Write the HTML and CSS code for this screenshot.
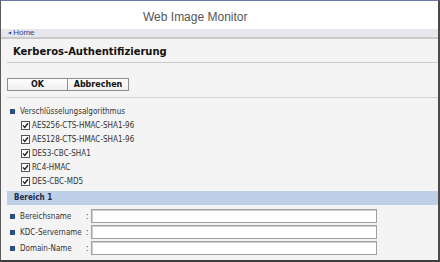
FILE: index.html
```html
<!DOCTYPE html>
<html>
<head>
<meta charset="utf-8">
<link rel="stylesheet" href="styles.css">
</head>
<body>
<div class="frame">
  <header class="top">Web Image Monitor</header>
  <nav class="crumb"><span class="arrow">&#9664;</span> Home</nav>
  <main class="content">
    <h1 class="title">Kerberos-Authentifizierung</h1>
    <div class="buttons">
      <button class="btn btn-ok">OK</button><button class="btn btn-cancel">Abbrechen</button>
    </div>
    <div class="section">
      <div class="head"><span class="sq"></span>Verschlüsselungsalgorithmus</div>
      <div class="checks">
        <label class="check"><svg class="cb" width="9" height="9" viewBox="0 0 9 9"><rect x="0.5" y="0.5" width="8" height="8" fill="#fff" stroke="#555"/><path d="M2 4.4 L3.8 6.4 L7 2.3" fill="none" stroke="#222" stroke-width="1.4"/></svg>AES256-CTS-HMAC-SHA1-96</label>
        <label class="check"><svg class="cb" width="9" height="9" viewBox="0 0 9 9"><rect x="0.5" y="0.5" width="8" height="8" fill="#fff" stroke="#555"/><path d="M2 4.4 L3.8 6.4 L7 2.3" fill="none" stroke="#222" stroke-width="1.4"/></svg>AES128-CTS-HMAC-SHA1-96</label>
        <label class="check"><svg class="cb" width="9" height="9" viewBox="0 0 9 9"><rect x="0.5" y="0.5" width="8" height="8" fill="#fff" stroke="#555"/><path d="M2 4.4 L3.8 6.4 L7 2.3" fill="none" stroke="#222" stroke-width="1.4"/></svg>DES3-CBC-SHA1</label>
        <label class="check"><svg class="cb" width="9" height="9" viewBox="0 0 9 9"><rect x="0.5" y="0.5" width="8" height="8" fill="#fff" stroke="#555"/><path d="M2 4.4 L3.8 6.4 L7 2.3" fill="none" stroke="#222" stroke-width="1.4"/></svg>RC4-HMAC</label>
        <label class="check"><svg class="cb" width="9" height="9" viewBox="0 0 9 9"><rect x="0.5" y="0.5" width="8" height="8" fill="#fff" stroke="#555"/><path d="M2 4.4 L3.8 6.4 L7 2.3" fill="none" stroke="#222" stroke-width="1.4"/></svg>DES-CBC-MD5</label>
      </div>
    </div>
    <div class="bar">Bereich 1</div>
    <div class="fields">
      <div class="field"><span class="sq"></span><span class="lbl">Bereichsname</span><span class="colon">:</span><span class="inp"></span></div>
      <div class="field"><span class="sq"></span><span class="lbl">KDC-Servername</span><span class="colon">:</span><span class="inp"></span></div>
      <div class="field"><span class="sq"></span><span class="lbl">Domain-Name</span><span class="colon">:</span><span class="inp"></span></div>
    </div>
  </main>
</div>
</body>
</html>
```
FILE: styles.css
```css
* { box-sizing: border-box; }
html, body { margin: 0; padding: 0; }
body { width: 440px; height: 262px; overflow: hidden; background: #f4f4f4; font-family: "DejaVu Sans Condensed", "DejaVu Sans", Verdana, sans-serif; }
.frame {
  width: 440px; height: 262px;
  border-top: 1px solid #6e76a6;
  border-left: 1px solid #5a5a5a;
  border-right: 2px solid #4a4a4a;
  border-bottom: 2px solid #3e3e3e;
  background: #f4f4f4;
  display: flex; flex-direction: column;
}
.top {
  height: 28px; background: #fff;
  font-family: "Liberation Sans", Arial, sans-serif; font-size: 12px; color: #555;
  padding-left: 142px; line-height: 32px;
}
.crumb {
  height: 10px; background: #e6e7ec;
  border-bottom: 2px solid #c9c9cc;
  font-family: "Liberation Sans", Arial, sans-serif; font-size: 8px; color: #2e3f96;
  padding-left: 7px; line-height: 8px;
}
.crumb .arrow { font-size: 4px; vertical-align: 1px; }
.content { flex: 1; padding-left: 6px; }
.title {
  margin: 0; height: 24px; border-bottom: 1px solid #cdcdcd;
  font-family: "DejaVu Sans", Verdana, sans-serif;
  font-size: 10px; font-weight: bold; color: #111; padding-left: 6px; line-height: 26px;
}
.buttons { margin-top: 15px; height: 20px; border-bottom: 1px solid #d2d2d2; display: flex; align-items: flex-start; }
.btn {
  height: 13px; padding: 0; margin: 0;
  border: 1px solid #8e8e8e; background: linear-gradient(#ffffff, #eeeeee);
  font-family: "DejaVu Sans", Verdana, sans-serif; font-size: 8px; font-weight: bold; color: #111; line-height: 11px;
}
.btn-ok { width: 61px; }
.btn-cancel { width: 61px; border-left: none; }
.section { padding-top: 6px; }
.head { height: 14px; display: flex; align-items: center; font-size: 8px; color: #333; padding-left: 3px; white-space: nowrap; }
.sq { width: 5px; height: 5px; background: #2d4e80; margin-right: 5px; flex: none; }
.checks { display: flex; flex-direction: column; }
.check { height: 14px; display: flex; align-items: center; padding-left: 14px; font-size: 8px; color: #333; white-space: nowrap; }
.cb { margin-right: 2px; flex: none; }
.bar {
  margin-top: 3px; height: 14px; background: #bed0e7;
  font-size: 8px; font-weight: bold; color: #1c2b4a; padding-left: 7px; line-height: 14px;
}
.fields { padding-top: 3px; display: flex; flex-direction: column; }
.field { height: 16px; display: flex; align-items: center; padding-left: 3px; font-size: 8px; color: #333; white-space: nowrap; }
.lbl { width: 66px; }
.colon { width: 5px; }
.inp {
  width: 286px; height: 14px; background: #fff;
  border: 1px solid #a0a0a0; box-shadow: inset 1px 1px 0 #d0d0d0;
}
```
